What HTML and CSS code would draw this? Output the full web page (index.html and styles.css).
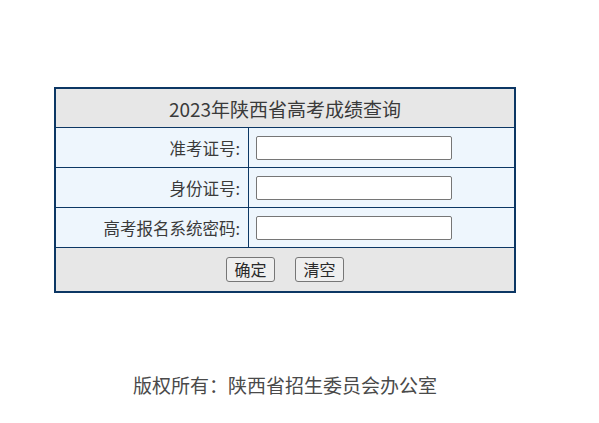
FILE: index.html
```html
<!DOCTYPE html>
<html lang="zh-CN">
<head>
<meta charset="utf-8">
<title>2023年陕西省高考成绩查询</title>
<link rel="stylesheet" href="styles.css">
</head>
<body>
<div class="page">
  <table class="query">
    <tr class="head"><td colspan="2">2023年陕西省高考成绩查询</td></tr>
    <tr class="row"><td class="label">准考证号:</td><td class="field"><input type="text"></td></tr>
    <tr class="row"><td class="label">身份证号:</td><td class="field"><input type="text"></td></tr>
    <tr class="row"><td class="label">高考报名系统密码:</td><td class="field"><input type="password"></td></tr>
    <tr class="actions"><td colspan="2"><button type="button">确定</button><button type="button">清空</button></td></tr>
  </table>
  <p class="footer">版权所有：陕西省招生委员会办公室</p>
</div>
</body>
</html>
```
FILE: styles.css
```css
html, body {
  margin: 0;
  padding: 0;
  background: #fff;
}
body {
  font-family: "Noto Sans CJK SC", "Noto Sans", sans-serif;
  color: #333;
}
.page {
  width: 462px;
  margin-left: 54px;
  padding-top: 87px;
}
.query {
  width: 462px;
  border-collapse: collapse;
  border: 2px solid #0c3764;
}
.query td {
  border: 1px solid #0c3764;
  padding: 0;
}
.head td {
  height: 38px;
  background: #e7e7e7;
  text-align: center;
  font-size: 19px;
  color: #3a3a3a;
}
.row td {
  height: 39px;
  background: #eef6fd;
}
.label {
  width: 184px;
  text-align: right;
  padding-right: 8px !important;
  font-size: 16.5px;
  color: #3a3a3a;
}
.field {
  padding-left: 7px !important;
}
.field input {
  display: block;
  box-sizing: border-box;
  width: 196px;
  height: 24px;
  margin: 0;
  border: 1px solid #767676;
  border-radius: 2px;
  background: #fff;
}
.actions td {
  height: 43px;
  background: #e7e7e7;
  text-align: center;
}
.actions button {
  box-sizing: border-box;
  width: 49px;
  height: 25px;
  margin: 0 10px;
  padding: 0;
  font-family: "Noto Sans CJK SC", sans-serif;
  font-size: 16px;
  line-height: 21px;
  color: #2a2a2a;
  background: #efefef;
  border: 1px solid #767676;
  border-radius: 3px;
}
.footer {
  margin: 78px 0 0;
  text-align: center;
  font-size: 19px;
  color: #4a4a4a;
}
```
